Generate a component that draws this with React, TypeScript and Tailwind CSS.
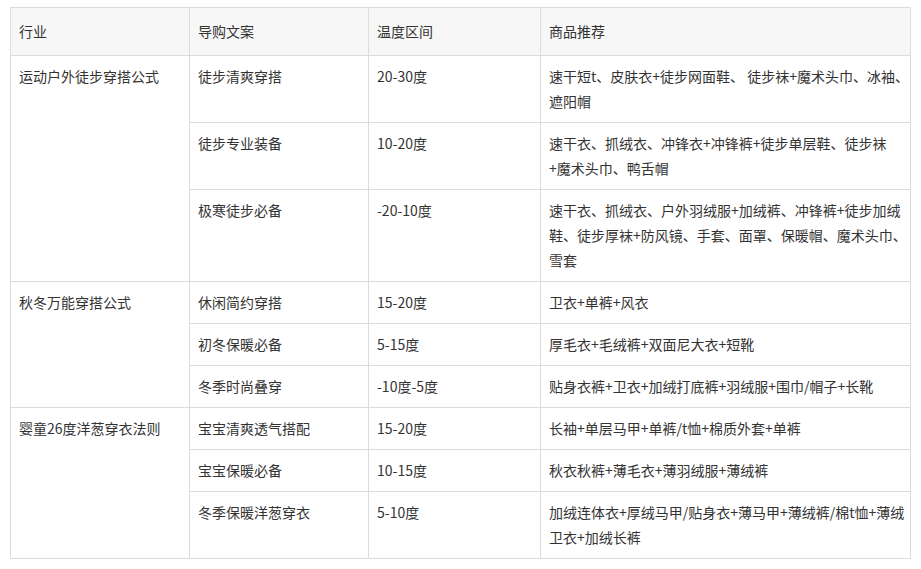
import React from "react";

type Sub = { copy: string; temp: string; items: React.ReactNode };
type Group = { industry: string; subs: Sub[] };

const groups: Group[] = [
  {
    industry: "运动户外徒步穿搭公式",
    subs: [
      {
        copy: "徒步清爽穿搭",
        temp: "20-30度",
        items: (
          <>
            速干短t、皮肤衣+徒步网面鞋、 徒步袜+魔术头巾、冰袖、
            <br />
            遮阳帽
          </>
        ),
      },
      {
        copy: "徒步专业装备",
        temp: "10-20度",
        items: (
          <>
            速干衣、抓绒衣、冲锋衣+冲锋裤+徒步单层鞋、徒步袜
            <br />
            +魔术头巾、鸭舌帽
          </>
        ),
      },
      {
        copy: "极寒徒步必备",
        temp: "-20-10度",
        items: (
          <>
            速干衣、抓绒衣、户外羽绒服+加绒裤、冲锋裤+徒步加绒
            <br />
            鞋、徒步厚袜+防风镜、手套、面罩、保暖帽、魔术头巾、
            <br />
            雪套
          </>
        ),
      },
    ],
  },
  {
    industry: "秋冬万能穿搭公式",
    subs: [
      { copy: "休闲简约穿搭", temp: "15-20度", items: "卫衣+单裤+风衣" },
      { copy: "初冬保暖必备", temp: "5-15度", items: "厚毛衣+毛绒裤+双面尼大衣+短靴" },
      {
        copy: "冬季时尚叠穿",
        temp: "-10度-5度",
        items: "贴身衣裤+卫衣+加绒打底裤+羽绒服+围巾/帽子+长靴",
      },
    ],
  },
  {
    industry: "婴童26度洋葱穿衣法则",
    subs: [
      {
        copy: "宝宝清爽透气搭配",
        temp: "15-20度",
        items: "长袖+单层马甲+单裤/t恤+棉质外套+单裤",
      },
      { copy: "宝宝保暖必备", temp: "10-15度", items: "秋衣秋裤+薄毛衣+薄羽绒服+薄绒裤" },
      {
        copy: "冬季保暖洋葱穿衣",
        temp: "5-10度",
        items: (
          <>
            加绒连体衣+厚绒马甲/贴身衣+薄马甲+薄绒裤/棉t恤+薄绒
            <br />
            卫衣+加绒长裤
          </>
        ),
      },
    ],
  },
];

const cell =
  "border border-[#dcdcdc] px-2 py-2 align-top text-left leading-[25px] font-normal whitespace-nowrap";
const head =
  "border border-[#dcdcdc] px-2 pt-[11px] pb-[11px] align-top text-left leading-[25px] font-normal";

export default function App() {
  return (
    <div
      className="w-[921px] h-[569px] bg-white pt-[7px] pl-[10px] text-[14px] text-[#333333]"
      style={{ fontFamily: '"Noto Sans CJK SC", "Noto Sans", sans-serif' }}
    >
      <table className="border-collapse table-fixed w-[900px]">
        <colgroup>
          <col className="w-[179px]" />
          <col className="w-[179px]" />
          <col className="w-[172px]" />
          <col className="w-[370px]" />
        </colgroup>
        <thead>
          <tr className="bg-[#f7f7f7]">
            <th className={head}>行业</th>
            <th className={head}>导购文案</th>
            <th className={head}>温度区间</th>
            <th className={head}>商品推荐</th>
          </tr>
        </thead>
        <tbody>
          {groups.map((g) =>
            g.subs.map((s, i) => (
              <tr key={g.industry + i}>
                {i === 0 && (
                  <td className={cell} rowSpan={g.subs.length}>
                    {g.industry}
                  </td>
                )}
                <td className={cell}>{s.copy}</td>
                <td className={cell}>{s.temp}</td>
                <td className={cell}>{s.items}</td>
              </tr>
            ))
          )}
        </tbody>
      </table>
    </div>
  );
}
